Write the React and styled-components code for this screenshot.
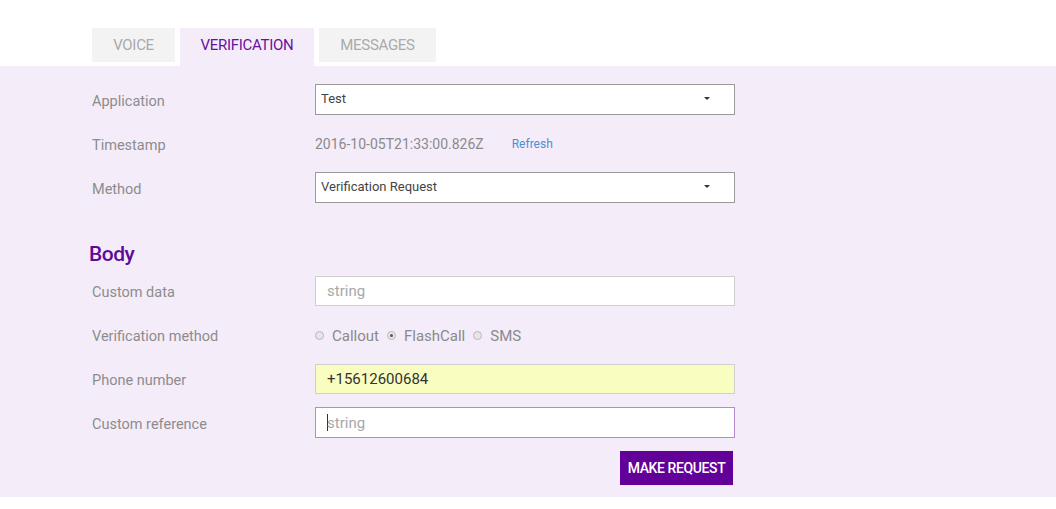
import React from 'react'
import styled, { createGlobalStyle } from 'styled-components'

const GlobalStyle = createGlobalStyle`
  body {
    margin: 0;
    background: #fff;
    font-family: Roboto, "Liberation Sans", sans-serif;
  }
`

const Page = styled.div`
  width: 1056px;
  height: 509px;
  background: #fff;
`

const Tabs = styled.div`
  display: flex;
  gap: 5px;
  padding: 28px 0 0 92px;
  align-items: flex-start;
`

const Tab = styled.div`
  width: ${p => p.w}px;
  height: ${p => (p.active ? '38px' : '34px')};
  text-align: center;
  background: ${p => (p.active ? '#f5ecfa' : '#f3f3f3')};
  color: ${p => (p.active ? '#6a0fa0' : '#aaaaaa')};
  font-size: 15px;
  line-height: 34px;
  text-transform: uppercase;
  letter-spacing: -0.3px;
`

const Panel = styled.div`
  background: #f5ecfa;
  padding: 18px 0 12px 92px;
  height: 431px;
  box-sizing: border-box;
`

const Row = styled.div`
  display: flex;
  align-items: center;
  height: 31px;
  margin-bottom: ${p => p.mb ?? 13}px;
`

const Label = styled.div`
  width: 223px;
  flex: none;
  padding-top: 3px;
  color: #8c8c8c;
  font-size: 14.5px;
`

const Select = styled.div`
  width: 420px;
  height: 31px;
  box-sizing: border-box;
  border: 1px solid #9a9a9a;
  background: #fff;
  display: flex;
  align-items: center;
  justify-content: space-between;
  padding: 0 24px 2px 5px;
  font-size: 13px;
  color: #444;
`

const Caret = styled.span`
  width: 0;
  height: 0;
  border-left: 3px solid transparent;
  border-right: 3px solid transparent;
  border-top: 3px solid #333;
`

const Value = styled.div`
  font-size: 14px;
  color: #8a8a8a;
  display: flex;
  align-items: center;
  gap: 28px;
`

const Link = styled.span`
  font-size: 12px;
  color: #4a8fd4;
`

const Heading = styled.h2`
  margin: 38px 0 7px -3px;
  color: #5d0a99;
  font-size: 21px;
  font-weight: 500;
  letter-spacing: -0.5px;
  height: 27px;
  line-height: 27px;
`

const Input = styled.div`
  width: 420px;
  height: ${p => (p.focus ? 31 : 30)}px;
  box-sizing: border-box;
  border: 1px solid ${p => (p.focus ? '#b28bd2' : '#cfcfcf')};
  background: ${p => p.bg || '#fff'};
  display: flex;
  align-items: center;
  padding: 0 11px;
  font-size: 15px;
  color: ${p => (p.filled ? '#333' : '#a8a8a8')};
`

const Cursor = styled.span`
  width: 1px;
  height: 17px;
  background: #333;
  margin-right: -1px;
`

const Radios = styled.div`
  display: flex;
  align-items: center;
  gap: 8px;
  padding-top: 2px;
  font-size: 15px;
  color: #8a8a8a;
`

const RadioItem = styled.label`
  display: flex;
  align-items: center;
  gap: 8px;
`

const Dot = styled.span`
  width: 9px;
  height: 9px;
  border-radius: 50%;
  box-sizing: border-box;
  border: 1px solid #b8b8b8;
  background: #e6e6e6;
  display: flex;
  align-items: center;
  justify-content: center;
  &::after {
    content: '';
    width: 3px;
    height: 3px;
    border-radius: 50%;
    background: ${p => (p.checked ? '#555' : 'transparent')};
  }
`

const Actions = styled.div`
  width: 643px;
  display: flex;
  justify-content: flex-end;
  margin-top: 13px;
`

const Button = styled.button`
  width: 113px;
  height: 34px;
  margin-right: 2px;
  border: none;
  background: #620099;
  color: #fff;
  font-family: inherit;
  font-size: 14px;
  font-weight: 500;
  text-transform: uppercase;
  letter-spacing: -0.4px;
  padding: 0;
`

export default function App() {
  return (
    <Page>
      <GlobalStyle />
      <Tabs>
        <Tab w={83}>Voice</Tab>
        <Tab w={134} active>Verification</Tab>
        <Tab w={117}>Messages</Tab>
      </Tabs>
      <Panel>
        <Row>
          <Label>Application</Label>
          <Select>Test<Caret /></Select>
        </Row>
        <Row>
          <Label>Timestamp</Label>
          <Value>2016-10-05T21:33:00.826Z<Link>Refresh</Link></Value>
        </Row>
        <Row mb={0}>
          <Label>Method</Label>
          <Select>Verification Request<Caret /></Select>
        </Row>
        <Heading>Body</Heading>
        <Row>
          <Label>Custom data</Label>
          <Input>string</Input>
        </Row>
        <Row>
          <Label>Verification method</Label>
          <Radios>
            <RadioItem><Dot />Callout</RadioItem>
            <RadioItem><Dot checked />FlashCall</RadioItem>
            <RadioItem><Dot />SMS</RadioItem>
          </Radios>
        </Row>
        <Row>
          <Label>Phone number</Label>
          <Input bg="#fafdc0" filled>+15612600684</Input>
        </Row>
        <Row mb={0}>
          <Label>Custom reference</Label>
          <Input focus><Cursor />string</Input>
        </Row>
        <Actions>
          <Button>Make request</Button>
        </Actions>
      </Panel>
    </Page>
  )
}
